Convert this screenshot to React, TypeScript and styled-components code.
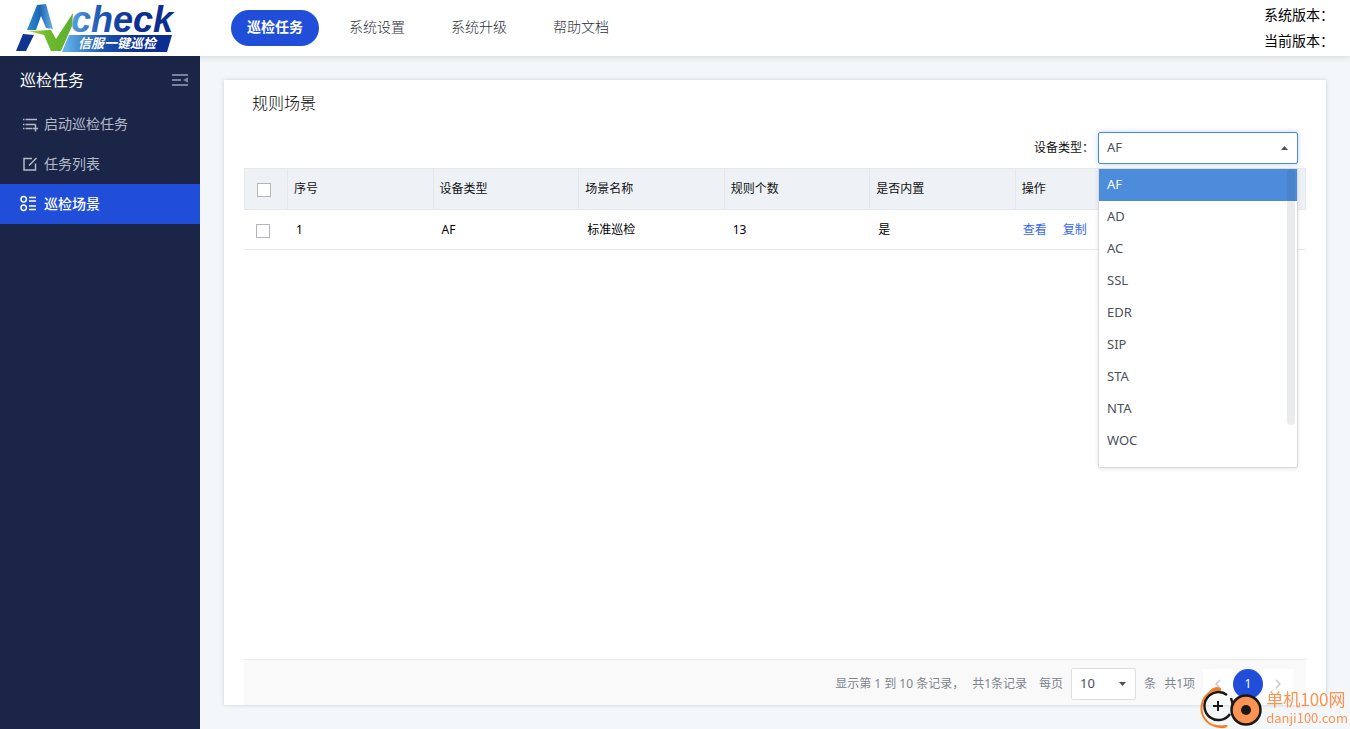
import React, { useState } from "react";
import styled, { createGlobalStyle } from "styled-components";

const GlobalStyle = createGlobalStyle`
  * { box-sizing: border-box; }
  body {
    margin: 0;
    font-family: "Noto Sans", "Noto Sans CJK SC", sans-serif;
    font-size: 12px;
    line-height: 20px;
    color: #111;
    background: #f3f7fa;
  }
  button, select { font-family: inherit; }
  a { text-decoration: none; }
`;

const Page = styled.div`
  display: flex;
  flex-direction: column;
  min-height: 100vh;
`;

const Header = styled.header`
  display: flex;
  align-items: center;
  height: 56px;
  padding: 0 16px;
  background: #fff;
  box-shadow: 0 1px 6px rgba(30, 50, 80, 0.16);
  z-index: 1;
`;

const LogoLink = styled.a`
  display: block;
  width: 160px;
  height: 52px;
  margin-right: 55px;
`;

const TopNav = styled.nav`
  display: flex;
  flex: 1;
  gap: 14px;
`;

const TopLink = styled.a<{ $active?: boolean }>`
  height: 36px;
  padding: 0 16px;
  border-radius: 18px;
  font-size: 14px;
  line-height: 34px;
  font-weight: ${(p) => (p.$active ? 700 : 300)};
  color: ${(p) => (p.$active ? "#fff" : "#2c3038")};
  background: ${(p) => (p.$active ? "#204ed9" : "transparent")};
`;

const Versions = styled.div`
  font-size: 14px;
  line-height: 26px;
  color: #000;
`;

const Body = styled.div`
  display: flex;
  flex: 1;
`;

const Sidebar = styled.aside`
  flex: 0 0 200px;
  color: #b4bac8;
  background: #1a2547;
`;

const SideTitle = styled.div`
  display: flex;
  align-items: center;
  justify-content: space-between;
  height: 48px;
  padding: 0 12px 0 20px;
`;

const SideHeading = styled.h2`
  margin: 0;
  font-size: 16px;
  line-height: 24px;
  font-weight: 400;
  color: #fff;
`;

const CollapseButton = styled.button`
  display: flex;
  padding: 0;
  border: 0;
  color: #79829a;
  background: none;
`;

const SideLink = styled.a<{ $active?: boolean }>`
  display: flex;
  align-items: center;
  gap: 4px;
  height: 40px;
  padding-left: 20px;
  font-size: 14px;
  font-weight: ${(p) => (p.$active ? 500 : 400)};
  color: ${(p) => (p.$active ? "#fff" : "#b4bac8")};
  background: ${(p) => (p.$active ? "#204ed9" : "transparent")};
`;

const Main = styled.main`
  display: flex;
  flex: 1;
  min-width: 0;
  padding: 24px;
`;

const Card = styled.section`
  display: flex;
  flex-direction: column;
  flex: 1;
  min-width: 0;
  padding: 0 20px;
  background: #fff;
  box-shadow: 0 0 4px rgba(30, 50, 80, 0.2);
`;

const CardTitle = styled.h1`
  margin: 0;
  padding: 11px 8px 17px;
  font-size: 16px;
  line-height: 24px;
  font-weight: 300;
  color: #000;
`;

const FilterRow = styled.div`
  display: flex;
  align-items: center;
  justify-content: flex-end;
  gap: 4px;
  padding: 0 8px 4px 0;
`;

const SelectBox = styled.div<{ $width: number }>`
  position: relative;
  width: ${(p) => p.$width}px;
`;

const Select = styled.select<{ $open?: boolean }>`
  display: block;
  width: 100%;
  height: 32px;
  padding: 0 8px 2px;
  border: 1px solid ${(p) => (p.$open ? "#4c8cdb" : "#dcdee2")};
  border-radius: 2px;
  outline: 0;
  appearance: none;
  font-size: 13px;
  color: #4a505c;
  background: #fff;
  box-shadow: ${(p) => (p.$open ? "0 0 5px rgba(76, 140, 219, 0.4)" : "none")};
`;

const Caret = styled.svg`
  position: absolute;
  top: 14px;
  right: 10px;
  pointer-events: none;
`;

const Menu = styled.ul`
  position: absolute;
  top: 36px;
  left: 0;
  width: 100%;
  height: 300px;
  margin: 0;
  padding: 0;
  list-style: none;
  border: 1px solid #d9dadc;
  border-radius: 2px;
  background: #fff;
  box-shadow: 0 1px 4px rgba(0, 0, 0, 0.1);
  z-index: 2;
`;

const MenuItem = styled.li<{ $active: boolean }>`
  height: 32px;
  padding: 0 8px;
  font-size: 13px;
  line-height: 30px;
  cursor: pointer;
  color: ${(p) => (p.$active ? "#fff" : "#4a505c")};
  background: ${(p) => (p.$active ? "#4c8cdb" : "transparent")};
`;

const ScrollThumb = styled.span`
  position: absolute;
  top: 0;
  right: 2px;
  width: 8px;
  height: 256px;
  border-radius: 4px;
  background: rgba(50, 60, 75, 0.1);
`;

const Table = styled.table`
  width: 100%;
  table-layout: fixed;
  border-collapse: separate;
  border-spacing: 0;
`;

const CheckCol = styled.col`
  width: 43px;
`;

const HeadCell = styled.th`
  height: 42px;
  padding: 0 6px;
  border: solid #e3e7ee;
  border-width: 1px 0 1px 1px;
  text-align: left;
  font-weight: 400;
  background: #eef1f6;
  &:first-child { padding-left: 12px; }
  &:last-child { border-right-width: 1px; }
`;

const Cell = styled.td`
  height: 40px;
  padding: 0 9px;
  border-bottom: 1px solid #e9eaec;
  color: #000;
  &:first-child { padding-left: 12px; }
  &:last-child { padding-left: 8px; }
`;

const Checkbox = styled.input`
  display: block;
  width: 14px;
  height: 14px;
  margin: 2px 0 0;
  border: 1px solid #b4b6ba;
  appearance: none;
  background: #fff;
  &:checked { background: #204ed9; }
`;

const ActionLink = styled.a`
  margin-right: 16px;
  color: #3566f5;
`;

const Pager = styled.footer`
  display: flex;
  align-items: center;
  justify-content: flex-end;
  gap: 8px;
  height: 46px;
  margin-top: auto;
  padding: 2px 13px 0 8px;
  border-top: 1px solid #e9eaec;
  color: #80858f;
  background: #f9f9f9;
`;

const PagerSummary = styled.span`
  margin-right: 4px;
`;

const PageButtons = styled.div`
  display: flex;
`;

const PageButton = styled.button<{ $current?: boolean }>`
  display: flex;
  align-items: center;
  justify-content: center;
  width: 30px;
  height: 30px;
  padding: 0;
  border: 0;
  border-radius: ${(p) => (p.$current ? "50%" : "0")};
  font-size: 12px;
  color: ${(p) => (p.$current ? "#fff" : "#c3c6cc")};
  background: ${(p) => (p.$current ? "#204ed9" : "#fff")};
`;

const Watermark = styled.div`
  position: fixed;
  right: 2px;
  bottom: 0;
  display: flex;
  align-items: center;
  gap: 2px;
  z-index: 3;
`;

const WatermarkText = styled.div`
  display: flex;
  flex-direction: column;
  font-family: "Noto Sans CJK SC", sans-serif;
  color: #fb9352;
`;

const WatermarkName = styled.span`
  font-size: 17px;
  line-height: 20px;
`;

const WatermarkSite = styled.span`
  font-size: 13px;
  line-height: 18px;
`;

const Logo = () => (
  <svg width="160" height="52" viewBox="16 2 160 52" role="img" aria-label="check">
    <defs>
      <linearGradient id="peak" x1="0" y1="0" x2="1" y2="0">
        <stop offset="0" stopColor="#2f8fd0" />
        <stop offset="0.5" stopColor="#1d65b4" />
        <stop offset="1" stopColor="#6cb5e6" />
      </linearGradient>
      <linearGradient id="word" gradientUnits="userSpaceOnUse" x1="66" y1="0" x2="136" y2="0">
        <stop offset="0" stopColor="#62b1e6" />
        <stop offset="0.5" stopColor="#1c58b2" />
        <stop offset="1" stopColor="#0b2e90" />
      </linearGradient>
      <linearGradient id="tick" x1="0" y1="0" x2="1" y2="0">
        <stop offset="0" stopColor="#b9d94a" />
        <stop offset="0.4" stopColor="#6fbb2e" />
        <stop offset="1" stopColor="#5cae2c" />
      </linearGradient>
    </defs>
    <path d="M27 30 L37 5 L46 4 L53 29 L46 28 L41 16 L36 30 Z" fill="url(#peak)" />
    <path d="M23 34 L34 35 L26 51 L16 51 Z" fill="#0f3590" />
    <path d="M28 31 L51 30 L56 39 L73 13 L72 26 L61 51 L51 51 L44 35 Z" fill="url(#tick)" />
    <path d="M69 35 L172 35 L167 52 L62 52 Z" fill="url(#word)" />
    <text x="71" y="32" fontFamily="Liberation Sans, sans-serif" fontSize="36" fontWeight="700" fontStyle="italic" fill="url(#word)">check</text>
    <text x="78" y="48" fontFamily="Noto Sans CJK SC, sans-serif" fontSize="13" fontWeight="700" fontStyle="italic" fill="#fff">信服一键巡检</text>
  </svg>
);

const CollapseIcon = () => (
  <svg width="16" height="14" viewBox="0 0 16 14" fill="none" stroke="currentColor" strokeWidth="2">
    <path d="M0 2H16M0 7H9M0 12H16" />
    <path d="M16 4.200V9.800L11 7Z" fill="currentColor" stroke="none" />
  </svg>
);

const StartIcon = () => (
  <svg width="20" height="20" viewBox="0 0 20 20" fill="none" stroke="currentColor" strokeWidth="1.5">
    <path d="M3 5.500H4.500M5.500 5.500H17M3 10.500H4.500M5.500 10.500H15.500M3 14.500H4.500M5.500 14.500H12M15.500 10.500V17.500M12.500 14.500H18" />
  </svg>
);

const EditIcon = () => (
  <svg width="20" height="20" viewBox="0 0 20 20" fill="none" stroke="currentColor" strokeWidth="1.5">
    <path d="M12 4.500H4V16H15.500V9.500M9 11.500L16.500 4" />
  </svg>
);

const SceneIcon = () => (
  <svg width="20" height="20" viewBox="0 0 20 20" fill="none" stroke="currentColor" strokeWidth="1.5">
    <circle cx="3.700" cy="5.200" r="2.700" />
    <circle cx="3.700" cy="13.800" r="2.700" />
    <path d="M9 3.500H16M9 7H16M9 12H16M9 15.500H16" />
  </svg>
);

const Chevron = ({ d }: { d: string }) => (
  <svg width="8" height="10" viewBox="0 0 8 10" fill="none" stroke="currentColor" strokeWidth="1.4">
    <path d={d} />
  </svg>
);

const WatermarkIcon = () => (
  <svg width="64" height="42" viewBox="0 0 64 42" fill="none">
    <path d="M9 6C1 12 -1 24 5 32C9 38 17 41 27 39" stroke="#fb7a1e" strokeWidth="2" />
    <path d="M8 7C11 1 17 -1 21 2L20 4C15 3 12 4 8 7Z" fill="#fb7a1e" stroke="#fb7a1e" />
    <path d="M13 37C18 39 23 39 28 38C26 42 20 43 13 37Z" fill="#fb7a1e" />
    <path d="M27 8A14 14 0 1 0 30 27" stroke="#1b1818" strokeWidth="2.500" />
    <path d="M13 19H23M18 14V24" stroke="#1b1818" strokeWidth="2" />
    <circle cx="46" cy="23" r="14.500" fill="#fb9352" stroke="#1b1818" strokeWidth="2.500" />
    <circle cx="46" cy="23" r="5" fill="#1b1818" />
    <path d="M31 11L33 18" stroke="#1b1818" strokeWidth="2.500" />
  </svg>
);

const deviceTypes = ["AF", "AD", "AC", "SSL", "EDR", "SIP", "STA", "NTA", "WOC"];
const topLinks = ["巡检任务", "系统设置", "系统升级", "帮助文档"];
const columns = ["序号", "设备类型", "场景名称", "规则个数", "是否内置"];
const scenes = [{ id: 1, device: "AF", name: "标准巡检", rules: 13, builtIn: "是" }];

export default function App() {
  const [device, setDevice] = useState("AF");

  return (
    <>
      <GlobalStyle />
      <Page>
        <Header>
          <LogoLink href="#"><Logo /></LogoLink>
          <TopNav>
            {topLinks.map((label, i) => (
              <TopLink key={label} href="#" $active={i === 0}>{label}</TopLink>
            ))}
          </TopNav>
          <Versions>
            <div>系统版本：</div>
            <div>当前版本：</div>
          </Versions>
        </Header>
        <Body>
          <Sidebar>
            <SideTitle>
              <SideHeading>巡检任务</SideHeading>
              <CollapseButton type="button" aria-label="收起"><CollapseIcon /></CollapseButton>
            </SideTitle>
            <nav>
              <SideLink href="#"><StartIcon />启动巡检任务</SideLink>
              <SideLink href="#"><EditIcon />任务列表</SideLink>
              <SideLink href="#" $active><SceneIcon />巡检场景</SideLink>
            </nav>
          </Sidebar>
          <Main>
            <Card>
              <CardTitle>规则场景</CardTitle>
              <FilterRow>
                <label htmlFor="device">设备类型：</label>
                <SelectBox $width={200}>
                  <Select id="device" $open value={device} onChange={(e) => setDevice(e.target.value)}>
                    {deviceTypes.map((d) => <option key={d}>{d}</option>)}
                  </Select>
                  <Caret width="7" height="4" viewBox="0 0 7 4"><path d="M0 4L3.500 0L7 4Z" fill="#4a505c" /></Caret>
                  <Menu role="listbox" aria-label="设备类型">
                    {deviceTypes.map((d) => (
                      <MenuItem key={d} role="option" aria-selected={d === device} $active={d === device} onClick={() => setDevice(d)}>
                        {d}
                      </MenuItem>
                    ))}
                    <ScrollThumb aria-hidden="true" />
                  </Menu>
                </SelectBox>
              </FilterRow>
              <Table>
                <colgroup>
                  <CheckCol />
                  <col span={7} />
                </colgroup>
                <thead>
                  <tr>
                    <HeadCell><Checkbox type="checkbox" aria-label="全选" /></HeadCell>
                    {columns.map((c) => <HeadCell key={c}>{c}</HeadCell>)}
                    <HeadCell colSpan={2}>操作</HeadCell>
                  </tr>
                </thead>
                <tbody>
                  {scenes.map((s) => (
                    <tr key={s.id}>
                      <Cell><Checkbox type="checkbox" aria-label={s.name} /></Cell>
                      <Cell>{s.id}</Cell>
                      <Cell>{s.device}</Cell>
                      <Cell>{s.name}</Cell>
                      <Cell>{s.rules}</Cell>
                      <Cell>{s.builtIn}</Cell>
                      <Cell colSpan={2}>
                        <ActionLink href="#">查看</ActionLink>
                        <ActionLink href="#">复制</ActionLink>
                      </Cell>
                    </tr>
                  ))}
                </tbody>
              </Table>
              <Pager>
                <span>显示第 1 到 10 条记录，</span>
                <PagerSummary>共1条记录</PagerSummary>
                <label htmlFor="size">每页</label>
                <SelectBox $width={65}>
                  <Select id="size" defaultValue="10">
                    <option>10</option>
                    <option>20</option>
                    <option>50</option>
                  </Select>
                  <Caret width="7" height="4" viewBox="0 0 7 4"><path d="M0 0L3.500 4L7 0Z" fill="#4a505c" /></Caret>
                </SelectBox>
                <span>条</span>
                <span>共1项</span>
                <PageButtons>
                  <PageButton type="button" aria-label="上一页"><Chevron d="M6 1L2 5L6 9" /></PageButton>
                  <PageButton type="button" $current>1</PageButton>
                  <PageButton type="button" aria-label="下一页"><Chevron d="M2 1L6 5L2 9" /></PageButton>
                </PageButtons>
              </Pager>
            </Card>
          </Main>
        </Body>
      </Page>
      <Watermark>
        <WatermarkIcon />
        <WatermarkText>
          <WatermarkName>单机100网</WatermarkName>
          <WatermarkSite>danji100.com</WatermarkSite>
        </WatermarkText>
      </Watermark>
    </>
  );
}
